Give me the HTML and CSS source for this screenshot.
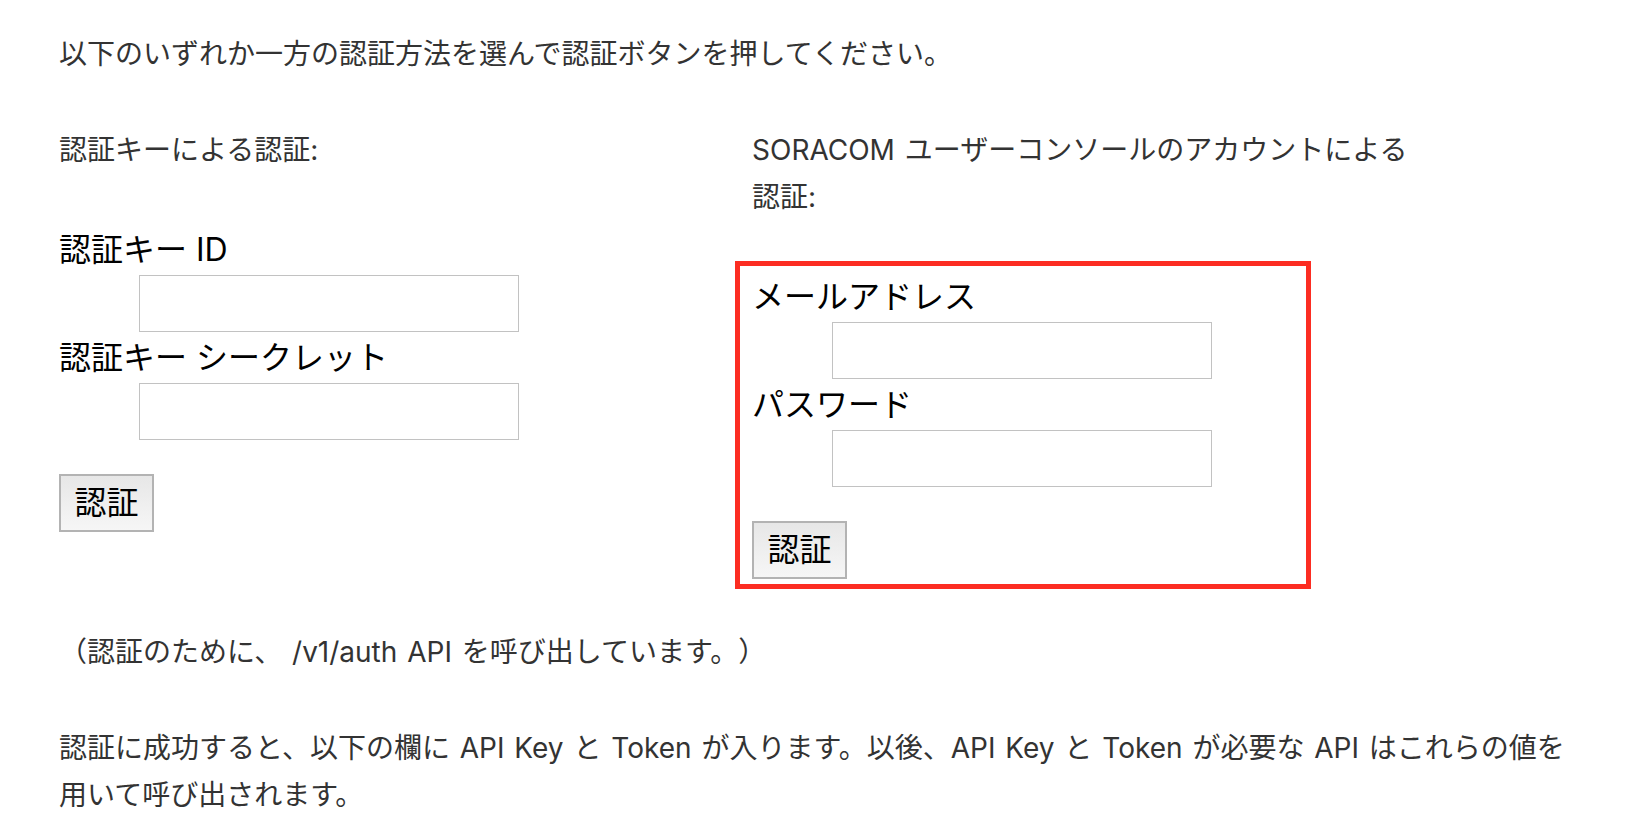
FILE: index.html
```html
<!DOCTYPE html>
<html lang="ja">
<head>
<meta charset="utf-8">
<title>認証</title>
<link rel="stylesheet" href="styles.css">
</head>
<body>
<div class="page">
  <p class="intro">以下のいずれか一方の認証方法を選んで認証ボタンを押してください。</p>
  <div class="cols">
    <div class="col">
      <p class="heading">認証キーによる認証:</p>
      <div class="form">
        <label class="field-label" for="key-id">認証キー ID</label>
        <input class="field" id="key-id" type="text">
        <label class="field-label" for="key-secret">認証キー シークレット</label>
        <input class="field" id="key-secret" type="password">
        <button class="btn" type="button">認証</button>
      </div>
    </div>
    <div class="col">
      <p class="heading">SORACOM ユーザーコンソールのアカウントによる認証:</p>
      <div class="form highlight">
        <label class="field-label" for="email">メールアドレス</label>
        <input class="field" id="email" type="text">
        <label class="field-label" for="password">パスワード</label>
        <input class="field" id="password" type="password">
        <button class="btn" type="button">認証</button>
      </div>
    </div>
  </div>
  <p class="note">（認証のために、 /v1/auth API を呼び出しています。）</p>
  <p class="note last">認証に成功すると、以下の欄に API Key と Token が入ります。以後、API Key と Token が必要な API はこれらの値を用いて呼び出されます。</p>
</div>
</body>
</html>
```
FILE: styles.css
```css
html, body {
  margin: 0;
  padding: 0;
  background: #ffffff;
}

body {
  font-family: Inter, "Noto Sans CJK JP", sans-serif;
  color: #333333;
  text-spacing-trim: space-all;
}

.page {
  padding: 31px 58px 0 59px;
}

.intro,
.heading,
.note {
  margin: 0;
  font-size: 28px;
  line-height: 47px;
  color: #333333;
  word-spacing: 2px;
}

.intro {
  margin-bottom: 49px;
}

.cols {
  display: grid;
  grid-template-columns: 693px 670px;
  align-items: start;
}

.heading {
  margin-bottom: 50px;
}

.form {
  display: flex;
  flex-direction: column;
  align-items: flex-start;
}

.highlight {
  box-sizing: border-box;
  width: 576px;
  margin: -10px 0 -10px -17px;
  padding: 5px 0 5px 12px;
  border: 5px solid #fc2d22;
}

.field-label {
  display: block;
  font-size: 32px;
  line-height: 51px;
  color: #000000;
}

.field {
  display: block;
  box-sizing: border-box;
  width: 380px;
  height: 57px;
  margin: 0 0 0 80px;
  padding: 0 8px;
  border: 1px solid #c2c2c2;
  background: #ffffff;
  font-size: 28px;
  font-family: inherit;
}

.btn {
  display: block;
  box-sizing: border-box;
  width: 95px;
  height: 58px;
  margin-top: 34px;
  padding: 0;
  border: 2px solid #b3b3b3;
  border-radius: 0;
  background: linear-gradient(#e7e7e7, #f6f6f6);
  font-family: inherit;
  font-size: 32px;
  line-height: 1;
  color: #000000;
}

.note {
  margin-top: 50px;
}

.note.last {
  margin-top: 49px;
}
```
